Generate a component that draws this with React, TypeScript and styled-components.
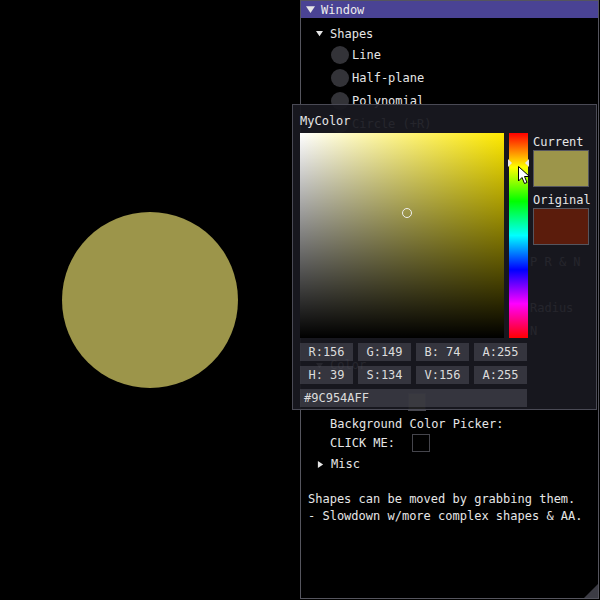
import React from "react";
import styled, { createGlobalStyle } from "styled-components";

const Global = createGlobalStyle`
  html, body { margin: 0; padding: 0; background: #000; }
  body { font-family: "DejaVu Sans Mono", "Liberation Mono", monospace; font-size: 12px; color: #e6e6e6; }
`;

const Page = styled.div`
  display: flex;
  width: 600px;
  height: 600px;
  background: #000;
  overflow: hidden;
`;

const Canvas = styled.div`
  width: 300px;
  height: 600px;
  display: flex;
  align-items: center;
  justify-content: center;
`;

const Disc = styled.div`
  width: 176px;
  height: 176px;
  border-radius: 50%;
  background: #9c954a;
`;

const Window = styled.div`
  position: relative;
  width: 299px;
  height: 599px;
  box-sizing: border-box;
  border: 1px solid #55555e;
  background: #000;
  display: flex;
  flex-direction: column;
`;

const TitleBar = styled.div`
  height: 17px;
  background: #4a4394;
  display: flex;
  align-items: center;
  gap: 6px;
  padding-left: 5px;
  color: #ececec;
`;

const Body = styled.div`
  display: flex;
  flex-direction: column;
  padding: 6px 8px 0 7px;
`;

const Row = styled.div<{ $h: number; $indent: number; $mt?: number }>`
  display: flex;
  align-items: center;
  height: ${(p) => p.$h}px;
  padding-left: ${(p) => p.$indent}px;
  margin-top: ${(p) => p.$mt ?? 0}px;
  gap: 3px;
  white-space: pre;
`;

const ArrowBox = styled.span`
  display: inline-flex;
  width: 11px;
  justify-content: flex-start;
`;

const RadioDot = styled.span`
  width: 18px;
  height: 18px;
  border-radius: 50%;
  background: #333338;
  flex: none;
`;

const Swatch = styled.span<{ $c: string; $ml?: number }>`
  width: 18px;
  height: 18px;
  box-sizing: border-box;
  background: ${(p) => p.$c};
  border: 1px solid #45454c;
  margin-left: ${(p) => p.$ml ?? 14}px;
`;

const Spacer = styled.div<{ $h: number }>`
  height: ${(p) => p.$h}px;
`;

const Grip = styled.div`
  position: absolute;
  right: 0;
  bottom: 0;
  width: 14px;
  height: 14px;
  background: #3c3c44;
  clip-path: polygon(100% 0, 100% 100%, 0 100%);
`;

/* Popup */
const Popup = styled.div`
  position: absolute;
  left: -9px;
  top: 103px;
  width: 305px;
  height: 306px;
  box-sizing: border-box;
  border: 1px solid #4a4a55;
  background: rgba(24, 24, 32, 0.94);
  padding: 7px 0 0 7px;
  display: flex;
  flex-direction: column;
`;

const PopupTitle = styled.div`
  height: 17px;
  margin-bottom: 4px;
  display: flex;
  align-items: center;
  color: #e6e6e6;
`;

const PickerRow = styled.div`
  display: flex;
  gap: 5px;
`;

const SV = styled.div<{ $hue: number }>`
  position: relative;
  width: 204px;
  height: 205px;
  background: linear-gradient(to top, #000, rgba(0, 0, 0, 0)),
    linear-gradient(to right, #fff, hsl(${(p) => p.$hue}, 100%, 50%));
`;

const SVMarker = styled.div`
  position: absolute;
  width: 10px;
  height: 10px;
  border-radius: 50%;
  border: 1.5px solid #f0f0f0;
  box-sizing: border-box;
  transform: translate(-50%, -50%);
`;

const HueBar = styled.div`
  position: relative;
  width: 19px;
  height: 205px;
  background: linear-gradient(
    to bottom,
    #ff0000 0%,
    #ffff00 16.7%,
    #00ff00 33.3%,
    #00ffff 50%,
    #0000ff 66.7%,
    #ff00ff 83.3%,
    #ff0000 100%
  );
`;

const Overlay = styled.svg`
  position: absolute;
  overflow: visible;
`;

const SideCol = styled.div`
  width: 56px;
  display: flex;
  flex-direction: column;
`;

const SideLabel = styled.div<{ $mt?: number }>`
  height: 17px;
  margin-top: ${(p) => p.$mt ?? 0}px;
  display: flex;
  align-items: center;
  color: #e6e6e6;
`;

const ColorBox = styled.div<{ $c: string }>`
  width: 56px;
  height: 37px;
  box-sizing: border-box;
  background: ${(p) => p.$c};
  border: 1px solid #55555e;
`;

const Fields = styled.div`
  display: grid;
  grid-template-columns: repeat(4, 53px);
  grid-auto-rows: 18px;
  gap: 5px;
  margin-top: 5px;
`;

const Field = styled.div<{ $left?: boolean }>`
  background: rgba(92, 92, 102, 0.45);
  color: #dcdcdc;
  display: flex;
  align-items: center;
  justify-content: ${(p) => (p.$left ? "flex-start" : "center")};
  padding-left: ${(p) => (p.$left ? 4 : 0)}px;
  white-space: pre;
`;

const HexField = styled(Field)`
  width: 227px;
  height: 18px;
  box-sizing: border-box;
  margin-top: 5px;
`;

const Tri = ({ dir, size = 7, color = "#e6e6e6" }: { dir: "down" | "right"; size?: number; color?: string }) =>
  dir === "down" ? (
    <svg width={size} height={size} viewBox="0 0 8 8">
      <polygon points="0,1 8,1 4,7" fill={color} />
    </svg>
  ) : (
    <svg width={size} height={size} viewBox="0 0 8 8">
      <polygon points="1,0 7,4 1,8" fill={color} />
    </svg>
  );

const Item = ({ label }: { label: string }) => (
  <Row $h={23} $indent={23}>
    <RadioDot />
    <span>{label}</span>
  </Row>
);

const RightLabel = ({ label }: { label: string }) => (
  <Row $h={23} $indent={222}>
    <span>{label}</span>
  </Row>
);

export default function App() {
  const hue = (39 / 255) * 360;
  const s = 134 / 255;
  const v = 156 / 255;
  return (
    <Page>
      <Global />
      <Canvas>
        <Disc />
      </Canvas>
      <Window>
        <TitleBar>
          <Tri dir="down" size={9} />
          <span>Window</span>
        </TitleBar>
        <Body>
          <Row $h={19} $indent={8}>
            <ArrowBox>
              <Tri dir="down" size={7} />
            </ArrowBox>
            <span>Shapes</span>
          </Row>
          <Item label="Line" />
          <Item label="Half-plane" />
          <Item label="Polynomial" />
          <Item label="Circle (+R)" />
          <Spacer $h={115} />
          <RightLabel label="P R & N" />
          <Spacer $h={23} />
          <RightLabel label="Radius" />
          <RightLabel label="N" />
          <Spacer $h={13} />
          <Row $h={20} $indent={8}>
            <ArrowBox>
              <Tri dir="down" size={7} />
            </ArrowBox>
            <span>Color</span>
          </Row>
          <Spacer $h={18} />
          <Row $h={18} $indent={22}>
            <Swatch $c="#9c954a" $ml={78} />
          </Row>
          <Row $h={18} $indent={22} $mt={4}>
            <span>Background Color Picker:</span>
          </Row>
          <Row $h={20} $indent={22}>
            <span>CLICK ME:</span>
            <Swatch $c="#000" />
          </Row>
          <Row $h={20} $indent={9} $mt={1}>
            <ArrowBox>
              <Tri dir="right" size={7} />
            </ArrowBox>
            <span>Misc</span>
          </Row>
          <Spacer $h={16} />
          <Row $h={17} $indent={0}>
            <span>Shapes can be moved by grabbing them.</span>
          </Row>
          <Row $h={17} $indent={0}>
            <span>- Slowdown w/more complex shapes &amp; AA.</span>
          </Row>
        </Body>
        <Grip />
        <Popup>
          <PopupTitle>MyColor</PopupTitle>
          <PickerRow>
            <SV $hue={hue}>
              <SVMarker style={{ left: `${s * 204}px`, top: `${(1 - v) * 205}px` }} />
            </SV>
            <HueBar>
              <Overlay width="19" height="10" style={{ left: 0, top: 25 }}>
                <polygon points="-1,1 3,5 -1,9" fill="#e8e8e8" />
                <polygon points="20,1 16,5 20,9" fill="#e8e8e8" />
              </Overlay>
              <Overlay width="12" height="19" style={{ left: 9, top: 33 }}>
                <path
                  d="M0.5 0.5 L0.5 15 L4 11.5 L6.5 17.5 L9 16.5 L6.5 10.5 L11.5 10.5 Z"
                  fill="#ffffff"
                  stroke="#000"
                  strokeWidth="1"
                  strokeLinejoin="round"
                />
              </Overlay>
            </HueBar>
            <SideCol>
              <SideLabel>Current</SideLabel>
              <ColorBox $c="#9c954a" />
              <SideLabel $mt={4}>Original</SideLabel>
              <ColorBox $c="#5b1c0c" />
            </SideCol>
          </PickerRow>
          <Fields>
            <Field>R:156</Field>
            <Field>G:149</Field>
            <Field>B: 74</Field>
            <Field>A:255</Field>
            <Field>H: 39</Field>
            <Field>S:134</Field>
            <Field>V:156</Field>
            <Field>A:255</Field>
          </Fields>
          <HexField $left>#9C954AFF</HexField>
        </Popup>
      </Window>
    </Page>
  );
}
